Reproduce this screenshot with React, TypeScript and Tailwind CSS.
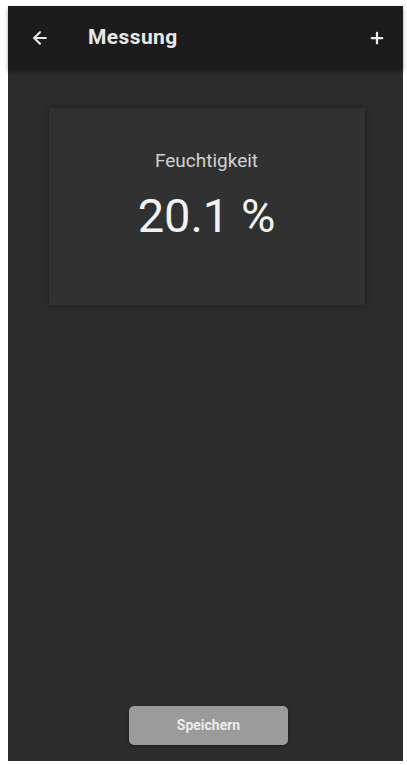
import { ArrowLeft, Plus } from "lucide-react"

// Messung screen: header bar, reading card and save button
export default function App() {
  return (
    <div className="w-[407px] h-[765px] bg-white pt-[6px] pl-[8px] pr-[4px] pb-[4px] font-['Roboto',sans-serif]">
      <div className="h-full flex flex-col bg-[#2c2c2c]">
        {/* Top bar */}
        <div className="h-[64px] shrink-0 bg-[#1c1c1c] flex items-center pl-[22px] pr-[17px] shadow-[0_2px_4px_rgba(0,0,0,0.35)]">
          <ArrowLeft className="w-[20px] h-[20px] text-[#e6e6e6]" strokeWidth={2.5} />
          <h1 className="ml-[38px] text-[21px] font-bold text-[#e8e8e8] tracking-[0.4px]">Messung</h1>
          <Plus className="ml-auto w-[18px] h-[18px] text-[#ececec]" strokeWidth={3} />
        </div>

        {/* Reading card */}
        <div className="flex-1 flex flex-col items-center">
          <div className="mt-[38px] ml-[2px] w-[316px] h-[197px] bg-[#313131] shadow-[0_0_6px_rgba(0,0,0,0.35)] flex flex-col items-center pt-[43px]">
            <span className="text-[19px] text-[#d2d2d2] leading-none">Feuchtigkeit</span>
            <span className="mt-[22px] text-[47px] text-[#f2f2f2] leading-none">20.1 %</span>
          </div>

          {/* Save button */}
          <button className="mt-auto mb-[16px] ml-[6px] w-[159px] h-[39px] rounded-[5px] bg-[#9b9b9b] text-[14px] font-bold text-[#ececec] shadow-[0_1px_3px_rgba(0,0,0,0.4)]">
            Speichern
          </button>
        </div>
      </div>
    </div>
  )
}
